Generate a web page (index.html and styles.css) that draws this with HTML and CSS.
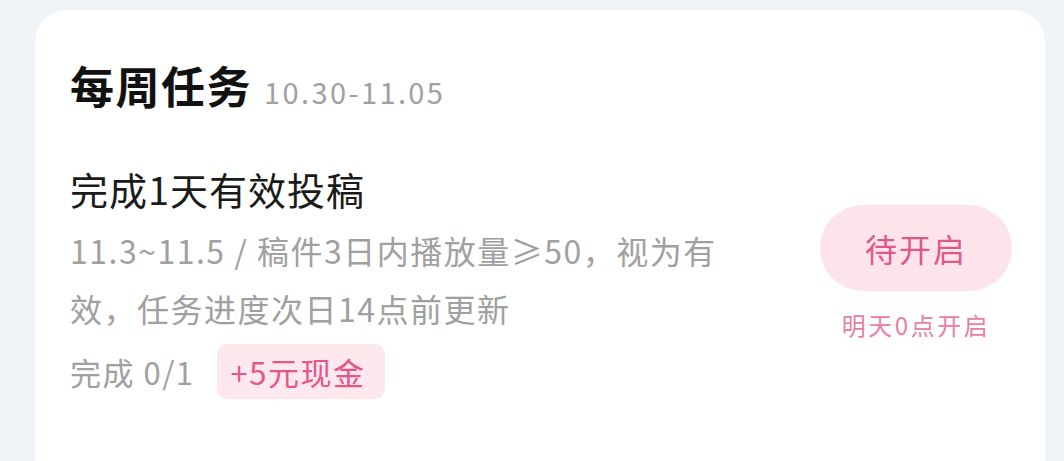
FILE: index.html
```html
<!DOCTYPE html>
<html lang="zh">
<head>
<meta charset="utf-8">
<link rel="stylesheet" href="styles.css">
</head>
<body>
<div class="card">
  <div class="head">
    <span class="head-title">每周任务</span>
    <span class="head-date">10.30-11.05</span>
  </div>
  <div class="task">
    <div class="task-main">
      <div class="task-title">完成1天有效投稿</div>
      <div class="task-desc">11.3~11.5 / 稿件3日内播放量≥50，视为有效，任务进度次日14点前更新</div>
      <div class="task-foot">
        <span class="progress">完成 0/1</span>
        <span class="reward">+5元现金</span>
      </div>
    </div>
    <div class="task-side">
      <div class="btn">待开启</div>
      <div class="hint">明天0点开启</div>
    </div>
  </div>
</div>
</body>
</html>
```
FILE: styles.css
```css
html, body {
  margin: 0;
  padding: 0;
  height: 100%;
  overflow: hidden;
}
body {
  background: #eef3f7;
  font-family: "Noto Sans CJK SC", "Noto Sans", sans-serif;
}
.card {
  margin: 10px 19px 0 35px;
  height: 451px;
  background: #ffffff;
  border-radius: 32px 32px 0 0;
  padding: 50px 33px 0 35px;
  box-sizing: border-box;
}
.head {
  display: flex;
  align-items: baseline;
  gap: 12px;
  line-height: 50px;
}
.head-title {
  font-size: 44px;
  font-weight: 700;
  letter-spacing: 1.5px;
  color: #111;
}
.head-date {
  font-size: 29px;
  letter-spacing: 2.4px;
  color: #a0a0a0;
}
.task {
  display: flex;
  justify-content: space-between;
  margin-top: 48px;
}
.task-main {
  width: 690px;
}
.task-title {
  font-size: 38px;
  letter-spacing: 1px;
  line-height: 50px;
  color: #1a1a1a;
}
.task-desc {
  margin-top: 7px;
  font-size: 32px;
  letter-spacing: 1.5px;
  line-height: 58px;
  color: #a0a0a0;
}
.task-foot {
  display: flex;
  align-items: center;
  gap: 22px;
  margin-top: 7px;
}
.progress {
  font-size: 31px;
  letter-spacing: 1.5px;
  color: #a0a0a0;
}
.reward {
  font-size: 31px;
  letter-spacing: 1.5px;
  line-height: 55px;
  padding: 0 20px 0 14px;
  color: #e6568a;
  background: #fde8ee;
  border-radius: 10px;
}
.task-side {
  display: flex;
  flex-direction: column;
  align-items: center;
  margin-top: 41px;
}
.btn {
  width: 192px;
  height: 86px;
  border-radius: 43px;
  background: #fde4eb;
  color: #e0588a;
  font-size: 32px;
  letter-spacing: 2px;
  display: flex;
  align-items: center;
  justify-content: center;
}
.hint {
  margin-top: 16px;
  font-size: 24px;
  letter-spacing: 2.5px;
  line-height: 36px;
  color: #ea7ea2;
}
```
